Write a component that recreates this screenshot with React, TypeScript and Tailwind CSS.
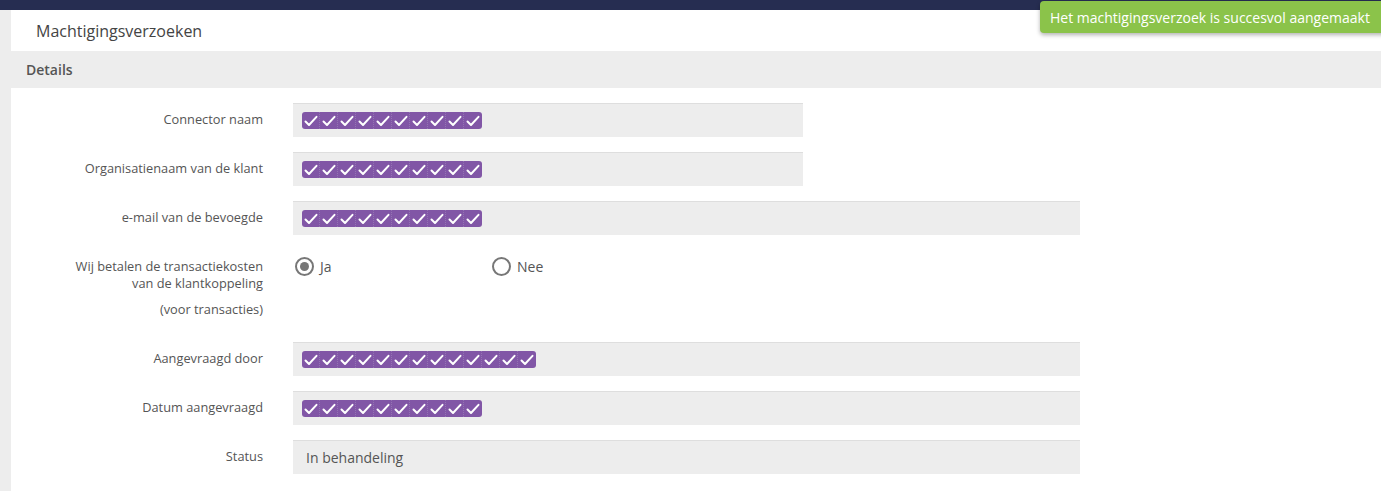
import React from "react";

const font = { fontFamily: '"Open Sans", "Noto Sans", sans-serif' };

function Checks({ n }: { n: number }) {
  return (
    <div className="flex h-[17px] rounded-[3px] bg-[#8156a6] overflow-hidden">
      {Array.from({ length: n }).map((_, i) => (
        <div
          key={i}
          className="w-[18px] h-[17px] flex items-center justify-center border-r border-dotted border-[#9474b3] last:border-r-0"
        >
          <svg width="14" height="12" viewBox="0 0 14 12">
            <path d="M1.5 6.5 L5 10 L12.5 1.8" fill="none" stroke="white" strokeWidth="2" strokeLinecap="round" strokeLinejoin="round" />
          </svg>
        </div>
      ))}
    </div>
  );
}

function Row({ label, wide, children }: { label: string; wide?: boolean; children: React.ReactNode }) {
  return (
    <div className="flex">
      <div className="w-[252px] shrink-0 text-right text-[12.8px] text-[#555] pt-[7px]">{label}</div>
      <div
        className={`ml-[30px] h-[34px] bg-[#ededed] border-t border-[#dedede] flex items-center pl-[9px] ${wide ? "w-[787px]" : "w-[510px]"}`}
      >
        {children}
      </div>
    </div>
  );
}

export default function App() {
  return (
    <div className="relative w-[1381px] h-[491px] bg-white overflow-hidden" style={font}>
      <div className="h-[10px] bg-[#262d51]" />
      <div className="flex h-[481px]">
        <div className="w-[11px] bg-[#ededed] shrink-0" />
        <div className="flex-1 flex flex-col">
          <div className="h-[41px] flex items-center pl-[25px] text-[16px] text-[#444]">Machtigingsverzoeken</div>
          <div className="h-[37px] bg-[#ededed] flex items-center pl-[15px] text-[14px] font-semibold text-[#555]">Details</div>
          <div className="flex flex-col gap-[15px] pt-[15px]">
            <Row label="Connector naam"><Checks n={10} /></Row>
            <Row label="Organisatienaam van de klant"><Checks n={10} /></Row>
            <Row label="e-mail van de bevoegde" wide><Checks n={10} /></Row>
            <div className="flex h-[77px]">
              <div className="w-[252px] shrink-0 text-right text-[12.8px] text-[#555] leading-[17px] pt-[8px]">
                <div>Wij betalen de transactiekosten</div>
                <div>van de klantkoppeling</div>
                <div className="mt-[9px]">(voor transacties)</div>
              </div>
              <div className="ml-[32px] flex pt-[7px]">
                <div className="w-[197px] flex items-start">
                  <div className="w-[19px] h-[19px] rounded-full border-2 border-[#777] flex items-center justify-center">
                    <div className="w-[9px] h-[9px] rounded-full bg-[#777]" />
                  </div>
                  <span className="ml-[6px] text-[14px] text-[#555] leading-[19px]">Ja</span>
                </div>
                <div className="flex items-start">
                  <div className="w-[19px] h-[19px] rounded-full border-2 border-[#777]" />
                  <span className="ml-[6px] text-[14px] text-[#555] leading-[19px]">Nee</span>
                </div>
              </div>
            </div>
            <Row label="Aangevraagd door" wide><Checks n={13} /></Row>
            <Row label="Datum aangevraagd" wide><Checks n={10} /></Row>
            <Row label="Status" wide><span className="text-[14px] text-[#555] pl-[4px]">In behandeling</span></Row>
          </div>
        </div>
      </div>
      <div className="absolute top-[1px] left-[1040px] w-[360px] h-[32px] rounded-[4px] bg-[#8bc34a] shadow-[0_2px_4px_rgba(0,0,0,0.3)] flex items-center pl-[10px] text-white text-[14px]">
        Het machtigingsverzoek is succesvol aangemaakt
      </div>
    </div>
  );
}
